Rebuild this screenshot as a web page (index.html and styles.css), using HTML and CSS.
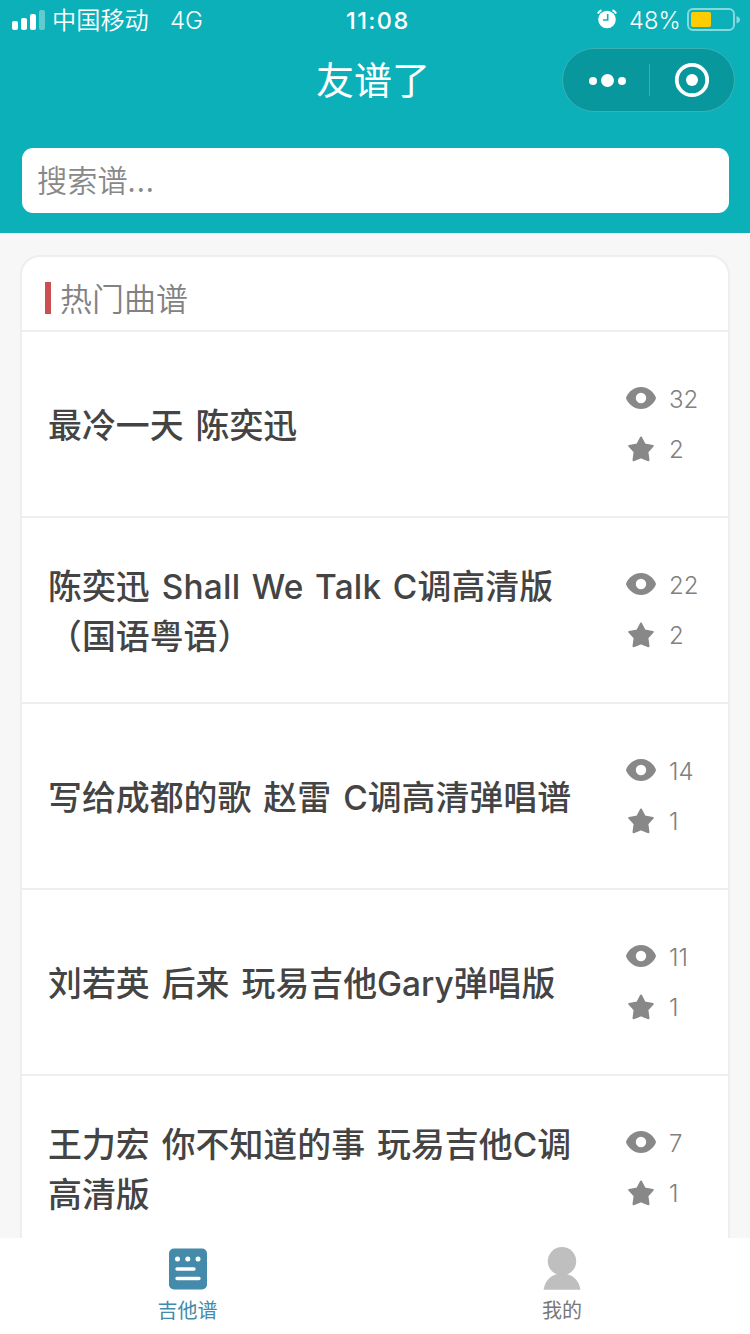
FILE: index.html
```
<!DOCTYPE html>
<html lang="zh-CN">
<head>
<meta charset="utf-8">
<title>友谱了</title>
<link rel="stylesheet" href="styles.css">
</head>
<body>
<svg class="defs" aria-hidden="true">
  <symbol id="eye" viewBox="0 0 30 22"><path fill-rule="evenodd" d="M15 0C22 0 27 4.500 29.600 9.700Q30.200 11 29.600 12.300C27 17.500 22 22 15 22S3 17.500.400 12.300Q-.200 11 .400 9.700C3 4.500 8 0 15 0ZM15 5.800a5.200 5.200 0 1 0 0 10.400a5.200 5.200 0 1 0 0-10.400Z"/></symbol>
  <symbol id="star" viewBox="0 0 26 26"><path d="M13 1.500L16.800 8.600L24.800 9.900L19.400 15.800L20.500 24.200L13 21.200L5.500 24.200L6.600 15.800L1.200 9.900L9.200 8.600Z" stroke-width="2" stroke-linejoin="round" stroke="currentColor"/></symbol>
</svg>
<div class="screen">
  <header class="top">
    <div class="status">
      <svg class="signal" width="34" height="22" viewBox="0 0 34 22"><g fill="#fff"><rect x="0" y="11" width="6" height="9" rx="2"/><rect x="9" y="8" width="6" height="12" rx="2"/><rect x="18" y="4" width="6" height="16" rx="2"/><rect x="27" y="0" width="6" height="20" rx="2" opacity=".35"/></g></svg>
      <span class="carrier">中国移动</span>
      <span class="network">4G</span>
      <span class="time">11:08</span>
      <svg class="alarm" width="20" height="20" viewBox="0 0 20 20"><circle cx="10" cy="10.500" r="8.800" fill="#fff"/><path d="M.800 4.500A7 7 0 0 1 4.500 1.200M15.500 1.200a7 7 0 0 1 3.700 3.300" fill="none" stroke="#fff" stroke-width="2"/><path d="M10.700 5v6H6" fill="none" stroke="#0bb0b9" stroke-width="1.600"/></svg>
      <span class="percent">48%</span>
      <svg class="battery" width="54" height="24" viewBox="0 0 54 24"><rect x="1" y="1" width="46" height="21" rx="5" fill="none" stroke="#fff" stroke-opacity=".5" stroke-width="2"/><rect x="4" y="4" width="20" height="15" rx="2" fill="#fc0"/><path d="M49.500 8q3.500 1.200 3.500 3.800t-3.500 3.800Z" fill="#fff" fill-opacity=".5"/></svg>
    </div>
    <div class="nav">
      <h1 class="nav-title">友谱了</h1>
      <svg class="capsule" width="174" height="64" viewBox="0 0 174 64"><rect x=".500" y=".500" width="172" height="63" rx="31.500" fill="#09979e" stroke="#3ab0b7"/><path d="M87.500 16v32" stroke="#3eadb3"/><g fill="#fff"><circle cx="31" cy="33" r="4"/><circle cx="45.500" cy="32.500" r="6.500"/><circle cx="60" cy="33" r="4"/><circle cx="130" cy="32" r="6"/></g><circle cx="130" cy="32" r="15.200" fill="none" stroke="#fff" stroke-width="3.800"/></svg>
    </div>
    <div class="search">搜索谱<span class="dots">...</span></div>
  </header>
  <main class="content">
    <section class="card">
      <h2 class="card-head">热门曲谱</h2>
      <article class="row">
        <h3 class="song">最冷一天 陈奕迅</h3>
        <div class="stats"><span class="stat"><svg class="eye"><use href="#eye"/></svg>32</span><span class="stat"><svg class="star"><use href="#star"/></svg>2</span></div>
      </article>
      <article class="row">
        <h3 class="song">陈奕迅 <span class="latin latin-wide">Shall We Talk C</span>调高清版<br>（国语粤语）</h3>
        <div class="stats"><span class="stat"><svg class="eye"><use href="#eye"/></svg>22</span><span class="stat"><svg class="star"><use href="#star"/></svg>2</span></div>
      </article>
      <article class="row">
        <h3 class="song">写给成都的歌 赵雷 <span class="latin">C</span>调高清弹唱谱</h3>
        <div class="stats"><span class="stat"><svg class="eye"><use href="#eye"/></svg>14</span><span class="stat"><svg class="star"><use href="#star"/></svg>1</span></div>
      </article>
      <article class="row">
        <h3 class="song">刘若英 后来 玩易吉他<span class="latin">Gary</span>弹唱版</h3>
        <div class="stats"><span class="stat"><svg class="eye"><use href="#eye"/></svg>11</span><span class="stat"><svg class="star"><use href="#star"/></svg>1</span></div>
      </article>
      <article class="row">
        <h3 class="song">王力宏 你不知道的事 玩易吉他<span class="latin">C</span>调<br>高清版</h3>
        <div class="stats"><span class="stat"><svg class="eye"><use href="#eye"/></svg>7</span><span class="stat"><svg class="star"><use href="#star"/></svg>1</span></div>
      </article>
    </section>
  </main>
  <nav class="tabs">
    <div class="tab tab-active">
      <svg width="40" height="44" viewBox="0 0 40 44"><rect x="1" y="2.500" width="38" height="41" rx="5" fill="#448aaa"/><g fill="#fff"><circle cx="9.500" cy="13" r="2.500"/><circle cx="19.800" cy="13" r="2.500"/><circle cx="30" cy="13" r="2.500"/></g><path d="M9 23h17M9 32.500h22" stroke="#fff" stroke-width="3.400" stroke-linecap="round"/></svg>
      <span>吉他谱</span>
    </div>
    <div class="tab">
      <svg class="person" width="40" height="44" viewBox="0 0 40 44"><g fill="#bfbfbf"><circle cx="20" cy="15.300" r="14.200"/><path d="M1.600 43.800C3 34 10 27.500 20 27.500S37 34 38.400 43.800Z"/></g></svg>
      <span class="tab-me">我的</span>
    </div>
  </nav>
</div>
</body>
</html>
```

FILE: styles.css
```
* { box-sizing: border-box; }
body { margin: 0; background: #f7f7f7; font-family: Inter, "Noto Sans CJK SC", sans-serif; }
h1, h2, h3 { margin: 0; font-weight: 400; }
svg { display: block; flex: none; fill: currentColor; }
.defs { display: none; }
.screen { width: 750px; height: 1334px; display: flex; flex-direction: column; overflow: hidden; }
.top { flex: none; height: 233px; background: #0bb0b9; color: #fff; }
.status { height: 40px; display: grid; grid-template-columns: 40px 118px 176px 251px 32px 58px 54px; padding-left: 12px; align-items: center; font-size: 24px; line-height: 38px; font-weight: 300; }
.signal { margin-top: 1px; }
.alarm { margin-top: -2px; }
.carrier { font-family: "Noto Sans CJK SC DemiLight", "Noto Sans CJK SC", sans-serif; font-weight: 350; font-size: 24.2px; padding-bottom: 2px; }
.network, .percent, .time { padding-top: 1px; }
.percent { font-size: 23.7px; }
.time { font-size: 23.5px; font-weight: 500; letter-spacing: 1.4px; }
.nav { height: 80px; display: grid; grid-template-columns: 1fr 174px; padding: 0 14px 0 316px; align-items: center; }
.nav-title { font-family: "Noto Sans CJK SC", sans-serif; font-size: 38px; line-height: 76px; padding-bottom: 4px; }
.search { margin: 28px 21px 0 22px; height: 65px; border-radius: 11px; background: #fff; color: #888; padding-left: 15px; font-family: "Noto Sans CJK SC DemiLight", "Noto Sans CJK SC", sans-serif; font-size: 30.2px; line-height: 62px; font-weight: 350; }
.dots { letter-spacing: 1px; }
.content { flex: 1; min-height: 0; overflow: hidden; padding: 22px 20px 0; }
.card { background: #fff; border: 2px solid #eee; border-radius: 20px 20px 0 0; height: 1100px; }
.card-head { height: 73px; padding: 7px 23px 0; display: flex; align-items: center; gap: 9px; color: #828282; font-family: "Noto Sans CJK SC DemiLight", "Noto Sans CJK SC", sans-serif; font-size: 32px; line-height: 67px; font-weight: 350; }
.card-head::before { content: ""; width: 6px; height: 32px; margin-top: 2px; background: #cb4f52; }
.row { height: 186px; border-top: 2px solid #eee; display: flex; justify-content: space-between; align-items: center; padding: 0 0 0 26px; }
.song { font-family: "Noto Sans CJK SC", sans-serif; font-size: 33.9px; line-height: 50px; font-weight: 500; color: #444; white-space: nowrap; word-spacing: 4.4px; }
.latin { font-family: Inter, sans-serif; font-size: 33.4px; line-height: 1; }
.latin-wide { word-spacing: 2.2px; letter-spacing: .25px; }
.stats { width: 102px; flex: none; display: flex; flex-direction: column; color: #808080; font-size: 24px; line-height: 50px; font-weight: 300; padding-top: 1px; }
.stat { display: grid; grid-template-columns: 30px 1fr; column-gap: 13px; align-items: center; }
.eye { width: 30px; height: 22px; margin-top: -3px; color: #888; }
.star { width: 26px; height: 26px; margin: -2px 0 0 2px; color: #888; }
.tabs { flex: none; height: 96px; display: grid; grid-template-columns: 1fr 1fr; background: #fff; }
.tab { display: flex; flex-direction: column; align-items: center; padding-top: 8px; color: #777; font-family: "Noto Sans CJK SC", sans-serif; font-size: 20px; line-height: 40px; }
.tab-active { color: #448aaa; }
.person { margin-right: 1px; }
.tab-me { margin-right: 1px; }
```
